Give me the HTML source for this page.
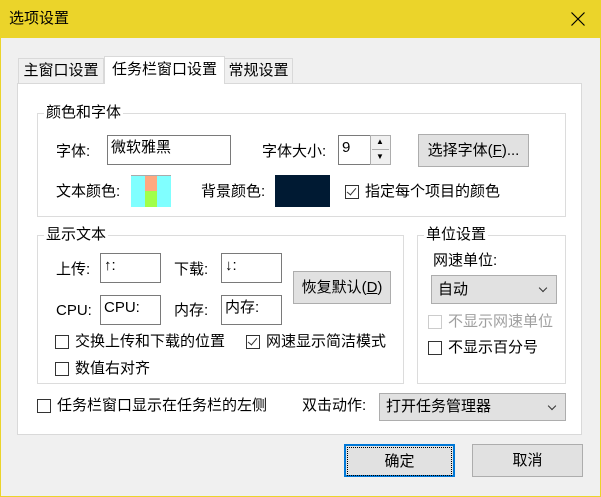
<!DOCTYPE html><html><head><meta charset="utf-8"><style>
*{box-sizing:border-box;margin:0;padding:0}
body{width:601px;height:497px;background:#f0f0f0;font-family:"Liberation Sans","Noto Sans CJK SC",sans-serif;font-size:15px;color:#000;position:relative;overflow:hidden}
.a{position:absolute;white-space:nowrap;line-height:20px}
.tb{position:absolute;left:0;top:0;width:601px;height:38px;background:#ebd42a}
.tab{position:absolute;border:1px solid #d9d9d9;border-bottom:none;background:#f0f0f0;text-align:center;line-height:24px}
.pan{position:absolute;left:17px;top:83px;width:565px;height:352px;background:#fff;border:1px solid #d9d9d9}
.grp{position:absolute;border:1px solid #dcdcdc}
.gl{position:absolute;background:#fff;padding:0 2px;line-height:18px}
.in{position:absolute;border:1px solid #7a7a7a;background:#fff;padding:2px 3px;line-height:20px}
.btn{position:absolute;border:1px solid #adadad;background:#e1e1e1;text-align:center}
.cb{position:absolute;width:14px;height:14px;border:1px solid #333;background:#fff}
.ck::after{content:"";position:absolute;left:3px;top:0px;width:4px;height:8px;border:solid #333;border-width:0 1.5px 1.5px 0;transform:rotate(40deg)}
.cmb{position:absolute;border:1px solid #adadad;background:#e1e1e1;padding-left:6px}
.cmb::after{content:"";position:absolute;right:10px;top:9px;width:5px;height:5px;border:solid #333;border-width:0 1px 1px 0;transform:rotate(45deg)}
</style></head><body>
<div class="tb"></div>
<div style="position:absolute;left:0;top:38px;width:1px;height:459px;background:#ebd42a"></div>
<div style="position:absolute;right:0;top:38px;width:1px;height:459px;background:#ebd42a"></div>
<div style="position:absolute;left:0;bottom:0;width:601px;height:1px;background:#ebd42a"></div>
<div class="a" style="left:9px;top:9px;font-size:15px">选项设置</div>
<svg style="position:absolute;left:571px;top:12px" width="14" height="14"><path d="M0.5 0.5L13.5 13.5M13.5 0.5L0.5 13.5" stroke="#000" stroke-width="1.2"/></svg>
<div class="pan"></div>
<div class="tab" style="left:18px;top:58px;width:86px;height:25px">主窗口设置</div>
<div class="tab" style="left:224px;top:58px;width:69px;height:25px">常规设置</div>
<div class="tab" style="left:104px;top:56px;width:121px;height:28px;background:#fff;line-height:26px">任务栏窗口设置</div>

<div class="grp" style="left:37px;top:113px;width:529px;height:104px"></div>
<div class="gl" style="left:44px;top:104px">颜色和字体</div>
<div class="a" style="left:56px;top:142px">字体:</div>
<div class="in" style="left:107px;top:135px;width:124px;height:30px">微软雅黑</div>
<div class="a" style="left:262px;top:142px">字体大小:</div>
<div class="in" style="left:338px;top:135px;width:33px;height:30px">9</div>
<div style="position:absolute;left:370px;top:135px;width:21px;height:30px;border:1px solid #adadad;background:#f0f0f0"></div>
<div style="position:absolute;left:372px;top:149px;width:17px;height:1px;background:#adadad"></div>
<div class="a" style="left:376px;top:136px;font-size:8px;line-height:12px">▲</div>
<div class="a" style="left:376px;top:151px;font-size:8px;line-height:12px">▼</div>
<div class="btn" style="left:418px;top:134px;width:111px;height:33px;line-height:31px">选择字体(<u>F</u>)...</div>
<div class="a" style="left:56px;top:182px">文本颜色:</div>
<div style="position:absolute;left:131px;top:175px;width:40px;height:32px;background:#80ffff;border-top:1px solid #aaa"></div>
<div style="position:absolute;left:145px;top:176px;width:12px;height:15px;background:#ffa880"></div>
<div style="position:absolute;left:145px;top:191px;width:12px;height:16px;background:#a0ff4a"></div>
<div class="a" style="left:201px;top:182px">背景颜色:</div>
<div style="position:absolute;left:275px;top:175px;width:55px;height:32px;background:#001a33"></div>
<div class="cb ck" style="left:345px;top:185px"></div>
<div class="a" style="left:365px;top:182px">指定每个项目的颜色</div>

<div class="grp" style="left:37px;top:235px;width:367px;height:149px"></div>
<div class="gl" style="left:44px;top:226px">显示文本</div>
<div class="a" style="left:56px;top:260px">上传:</div>
<div class="in" style="left:100px;top:253px;width:61px;height:30px">↑:</div>
<div class="a" style="left:174px;top:260px">下载:</div>
<div class="in" style="left:221px;top:253px;width:61px;height:30px">↓:</div>
<div class="btn" style="left:293px;top:271px;width:98px;height:33px;line-height:31px">恢复默认(<u>D</u>)</div>
<div class="a" style="left:56px;top:301px">CPU:</div>
<div class="in" style="left:100px;top:295px;width:61px;height:30px">CPU:</div>
<div class="a" style="left:174px;top:301px">内存:</div>
<div class="in" style="left:221px;top:295px;width:61px;height:30px">内存:</div>
<div class="cb" style="left:55px;top:335px"></div>
<div class="a" style="left:75px;top:332px">交换上传和下载的位置</div>
<div class="cb ck" style="left:246px;top:335px"></div>
<div class="a" style="left:266px;top:332px">网速显示简洁模式</div>
<div class="cb" style="left:55px;top:362px"></div>
<div class="a" style="left:75px;top:359px">数值右对齐</div>

<div class="grp" style="left:417px;top:235px;width:149px;height:149px"></div>
<div class="gl" style="left:424px;top:226px">单位设置</div>
<div class="a" style="left:433px;top:251px">网速单位:</div>
<div class="cmb" style="left:431px;top:275px;width:126px;height:29px;line-height:27px">自动</div>
<div class="cb" style="left:428px;top:315px;border-color:#ccc"></div>
<div class="a" style="left:448px;top:312px;color:#a0a0a0">不显示网速单位</div>
<div class="cb" style="left:428px;top:341px"></div>
<div class="a" style="left:448px;top:338px">不显示百分号</div>

<div class="cb" style="left:37px;top:399px"></div>
<div class="a" style="left:57px;top:396px">任务栏窗口显示在任务栏的左侧</div>
<div class="a" style="left:302px;top:396px">双击动作:</div>
<div class="cmb" style="left:379px;top:393px;width:187px;height:28px;line-height:26px">打开任务管理器</div>

<div class="btn" style="left:344px;top:444px;width:111px;height:33px;line-height:29px;border:2px solid #0078d7"><span style="display:block;margin:1px;border:1px dotted #000;line-height:27px">确定</span></div>
<div class="btn" style="left:472px;top:444px;width:111px;height:33px;line-height:31px">取消</div>
</body></html>
